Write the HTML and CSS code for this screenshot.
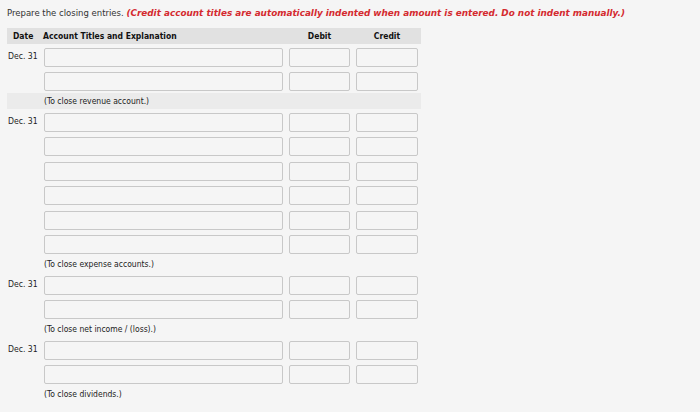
FILE: index.html
```html
<!DOCTYPE html>
<html lang="en">
<head>
<meta charset="utf-8">
<title>Closing entries</title>
<link rel="stylesheet" href="styles.css">
</head>
<body>
<p class="prompt">Prepare the closing entries. <em class="note">(Credit account titles are automatically indented when amount is entered. Do not indent manually.)</em></p>
<div class="journal">
  <div class="row head">
    <span class="h-date">Date</span>
    <span class="h-acct">Account Titles and Explanation</span>
    <span class="h-num">Debit</span>
    <span class="h-num">Credit</span>
  </div>

  <div class="entry">
    <div class="row line"><span class="date">Dec. 31</span><input class="acct" type="text"><input class="amt" type="text"><input class="amt" type="text"></div>
    <div class="row line"><span class="date"></span><input class="acct" type="text"><input class="amt" type="text"><input class="amt" type="text"></div>
    <div class="expl shaded"><span>(To close revenue account.)</span></div>
  </div>

  <div class="entry">
    <div class="row line"><span class="date">Dec. 31</span><input class="acct" type="text"><input class="amt" type="text"><input class="amt" type="text"></div>
    <div class="row line"><span class="date"></span><input class="acct" type="text"><input class="amt" type="text"><input class="amt" type="text"></div>
    <div class="row line"><span class="date"></span><input class="acct" type="text"><input class="amt" type="text"><input class="amt" type="text"></div>
    <div class="row line"><span class="date"></span><input class="acct" type="text"><input class="amt" type="text"><input class="amt" type="text"></div>
    <div class="row line"><span class="date"></span><input class="acct" type="text"><input class="amt" type="text"><input class="amt" type="text"></div>
    <div class="row line"><span class="date"></span><input class="acct" type="text"><input class="amt" type="text"><input class="amt" type="text"></div>
    <div class="expl"><span>(To close expense accounts.)</span></div>
  </div>

  <div class="entry">
    <div class="row line"><span class="date">Dec. 31</span><input class="acct" type="text"><input class="amt" type="text"><input class="amt" type="text"></div>
    <div class="row line"><span class="date"></span><input class="acct" type="text"><input class="amt" type="text"><input class="amt" type="text"></div>
    <div class="expl"><span>(To close net income / (loss).)</span></div>
  </div>

  <div class="entry">
    <div class="row line"><span class="date">Dec. 31</span><input class="acct" type="text"><input class="amt" type="text"><input class="amt" type="text"></div>
    <div class="row line"><span class="date"></span><input class="acct" type="text"><input class="amt" type="text"><input class="amt" type="text"></div>
    <div class="expl"><span>(To close dividends.)</span></div>
  </div>
</div>
</body>
</html>
```

FILE: styles.css
```css
html, body {
  margin: 0;
  background: #f5f5f5;
}
body {
  padding: 0 7px;
  font-family: "DejaVu Sans", Verdana, sans-serif;
  color: #222;
}
.prompt {
  margin: 0;
  padding-top: 7px;
  font-size: 8.5px;
  line-height: 12px;
  color: #333;
  white-space: nowrap;
}
.note {
  color: #d42a2f;
  font-weight: bold;
  font-style: italic;
  font-size: 8.85px;
}
.journal {
  width: 414px;
  margin-top: 9px;
}
.row {
  display: grid;
  grid-template-columns: 31px 239px 61px 62px;
  column-gap: 6px;
  padding-right: 3px;
  align-items: center;
}
.head {
  background: #e1e1e1;
  height: 15.6px;
  font-size: 8.5px;
  font-weight: bold;
  color: #111;
  font-family: "DejaVu Sans Condensed", "DejaVu Sans", sans-serif;
}
.h-date {
  padding-left: 6px;
}
.h-acct {
  margin-left: -1px;
  white-space: nowrap;
}
.h-num {
  text-align: center;
}
.entry {
  padding-top: 4.2px;
}
.line {
  height: 19px;
}
.line + .line {
  margin-top: 5.5px;
}
.date {
  font-size: 8.6px;
  font-family: "DejaVu Sans Condensed", "DejaVu Sans", sans-serif;
  padding-left: 1px;
  white-space: nowrap;
  margin-top: -2px;
  color: #222;
}
input {
  display: block;
  box-sizing: border-box;
  width: 100%;
  height: 19px;
  margin: 0;
  padding: 0 4px;
  border: 1px solid #c8c8c8;
  border-radius: 2px;
  background: #f5f5f5;
  font: inherit;
}
.expl {
  margin-top: 1.3px;
  height: 16px;
  display: flex;
  align-items: center;
  padding-left: 37px;
  font-size: 8.5px;
  font-family: "DejaVu Sans Condensed", "DejaVu Sans", sans-serif;
  color: #222;
}
.shaded {
  background: #ebebeb;
}
```
